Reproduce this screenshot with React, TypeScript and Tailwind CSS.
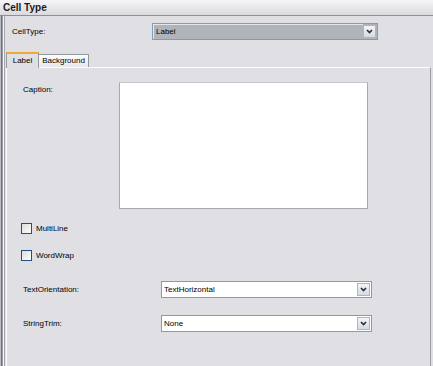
import React from 'react';

const font = { fontFamily: '"Liberation Sans", Arial, sans-serif' };

const Chevron: React.FC = () => (
  <svg width="7" height="5" viewBox="0 0 7 5" className="block">
    <path d="M1 1 L3.5 3.5 L6 1" fill="none" stroke="#2a2f3a" strokeWidth="1.7" />
  </svg>
);

interface ComboProps {
  value: string;
  width: string;
  disabled?: boolean;
}

const Combo: React.FC<ComboProps> = ({ value, width, disabled }) => (
  <div className={`${width} h-[17px] flex border border-[#7f9db9] ${disabled ? 'bg-[#b1b3bb]' : 'bg-white'}`}>
    <div className={`flex-1 flex items-center pl-[2px] text-[8px] text-black ${disabled ? 'border-t border-l border-[#e4e6ea]' : ''}`}>
      {value}
    </div>
    <div className="w-[13px] my-[1px] mr-[1px] flex items-center justify-center border border-[#a6b5d0] bg-gradient-to-b from-[#f4f5f8] to-[#d6dae4]">
      <Chevron />
    </div>
  </div>
);

const Check: React.FC<{ label: string }> = ({ label }) => (
  <div className="flex items-center h-[11px] pl-[14px]">
    <div className="w-[11px] h-[11px] border border-[#1c5180] bg-gradient-to-br from-[#dcdcd7] to-white" />
    <span className="ml-[4px] text-[8px] text-black">{label}</span>
  </div>
);

export default function App() {
  return (
    <div className="w-[433px] h-[366px] overflow-hidden bg-[#e0dfe3] flex flex-col" style={font}>
      <div className="h-[16px] shrink-0 pl-[3px] flex items-center bg-gradient-to-b from-[#f6f6f8] to-[#d9d9df] border-b border-[#8f8f99] text-[10px] font-bold text-[#1b1b20]">
        Cell Type
      </div>
      <div className="flex-1 flex">
        <div className="w-px bg-[#bdbdc5]" />
        <div className="w-px bg-[#70707f]" />
        <div className="w-px bg-[#9b9ba3]" />
        <div className="w-px bg-[#f7f7f9]" />
        <div className="w-px bg-[#a6a6ae]" />
        <div className="flex-1 flex flex-col">
          <div className="mt-[7px] flex items-center">
            <div className="w-[147px] pl-[7px] text-[8px] text-black">CellType:</div>
            <Combo value="Label" width="w-[226px]" disabled />
          </div>

          <div className="mt-[11px] ml-[1px] w-[425px] flex flex-col flex-1">
            <div className="flex items-end h-[16px]">
              <div className="relative z-10 w-[33px] h-[16px] -mb-px bg-[#e0dfe3] border-x border-[#919b9c] border-t-2 border-t-[#f0a93c] flex justify-center pt-[1px] text-[8px] text-black">
                Label
              </div>
              <div className="w-[50px] h-[13px] bg-gradient-to-b from-[#fdfdfd] to-[#e6e6ec] border-t border-r border-[#919b9c] flex justify-center items-center text-[8px] text-black">
                Background
              </div>
            </div>
            <div className="flex-1 border-t border-l border-[#fcfcfd] border-r border-r-[#9c9ca4] flex flex-col">
              <div className="mt-[14px] flex">
                <div className="w-[112px] pl-[16px] pt-[2px] text-[8px] text-black">Caption:</div>
                <div className="w-[249px] h-[127px] bg-white border border-[#a9a9b1] border-t-[#c6c6cc]" />
              </div>
              <div className="mt-[14px]">
                <Check label="MultiLine" />
              </div>
              <div className="mt-[16px]">
                <Check label="WordWrap" />
              </div>
              <div className="mt-[20px] flex items-center">
                <div className="w-[154px] pl-[16px] text-[8px] text-black">TextOrientation:</div>
                <Combo value="TextHorizontal" width="w-[211px]" />
              </div>
              <div className="mt-[17px] flex items-center">
                <div className="w-[154px] pl-[16px] text-[8px] text-black">StringTrim:</div>
                <Combo value="None" width="w-[211px]" />
              </div>
            </div>
          </div>
        </div>
      </div>
    </div>
  );
}
